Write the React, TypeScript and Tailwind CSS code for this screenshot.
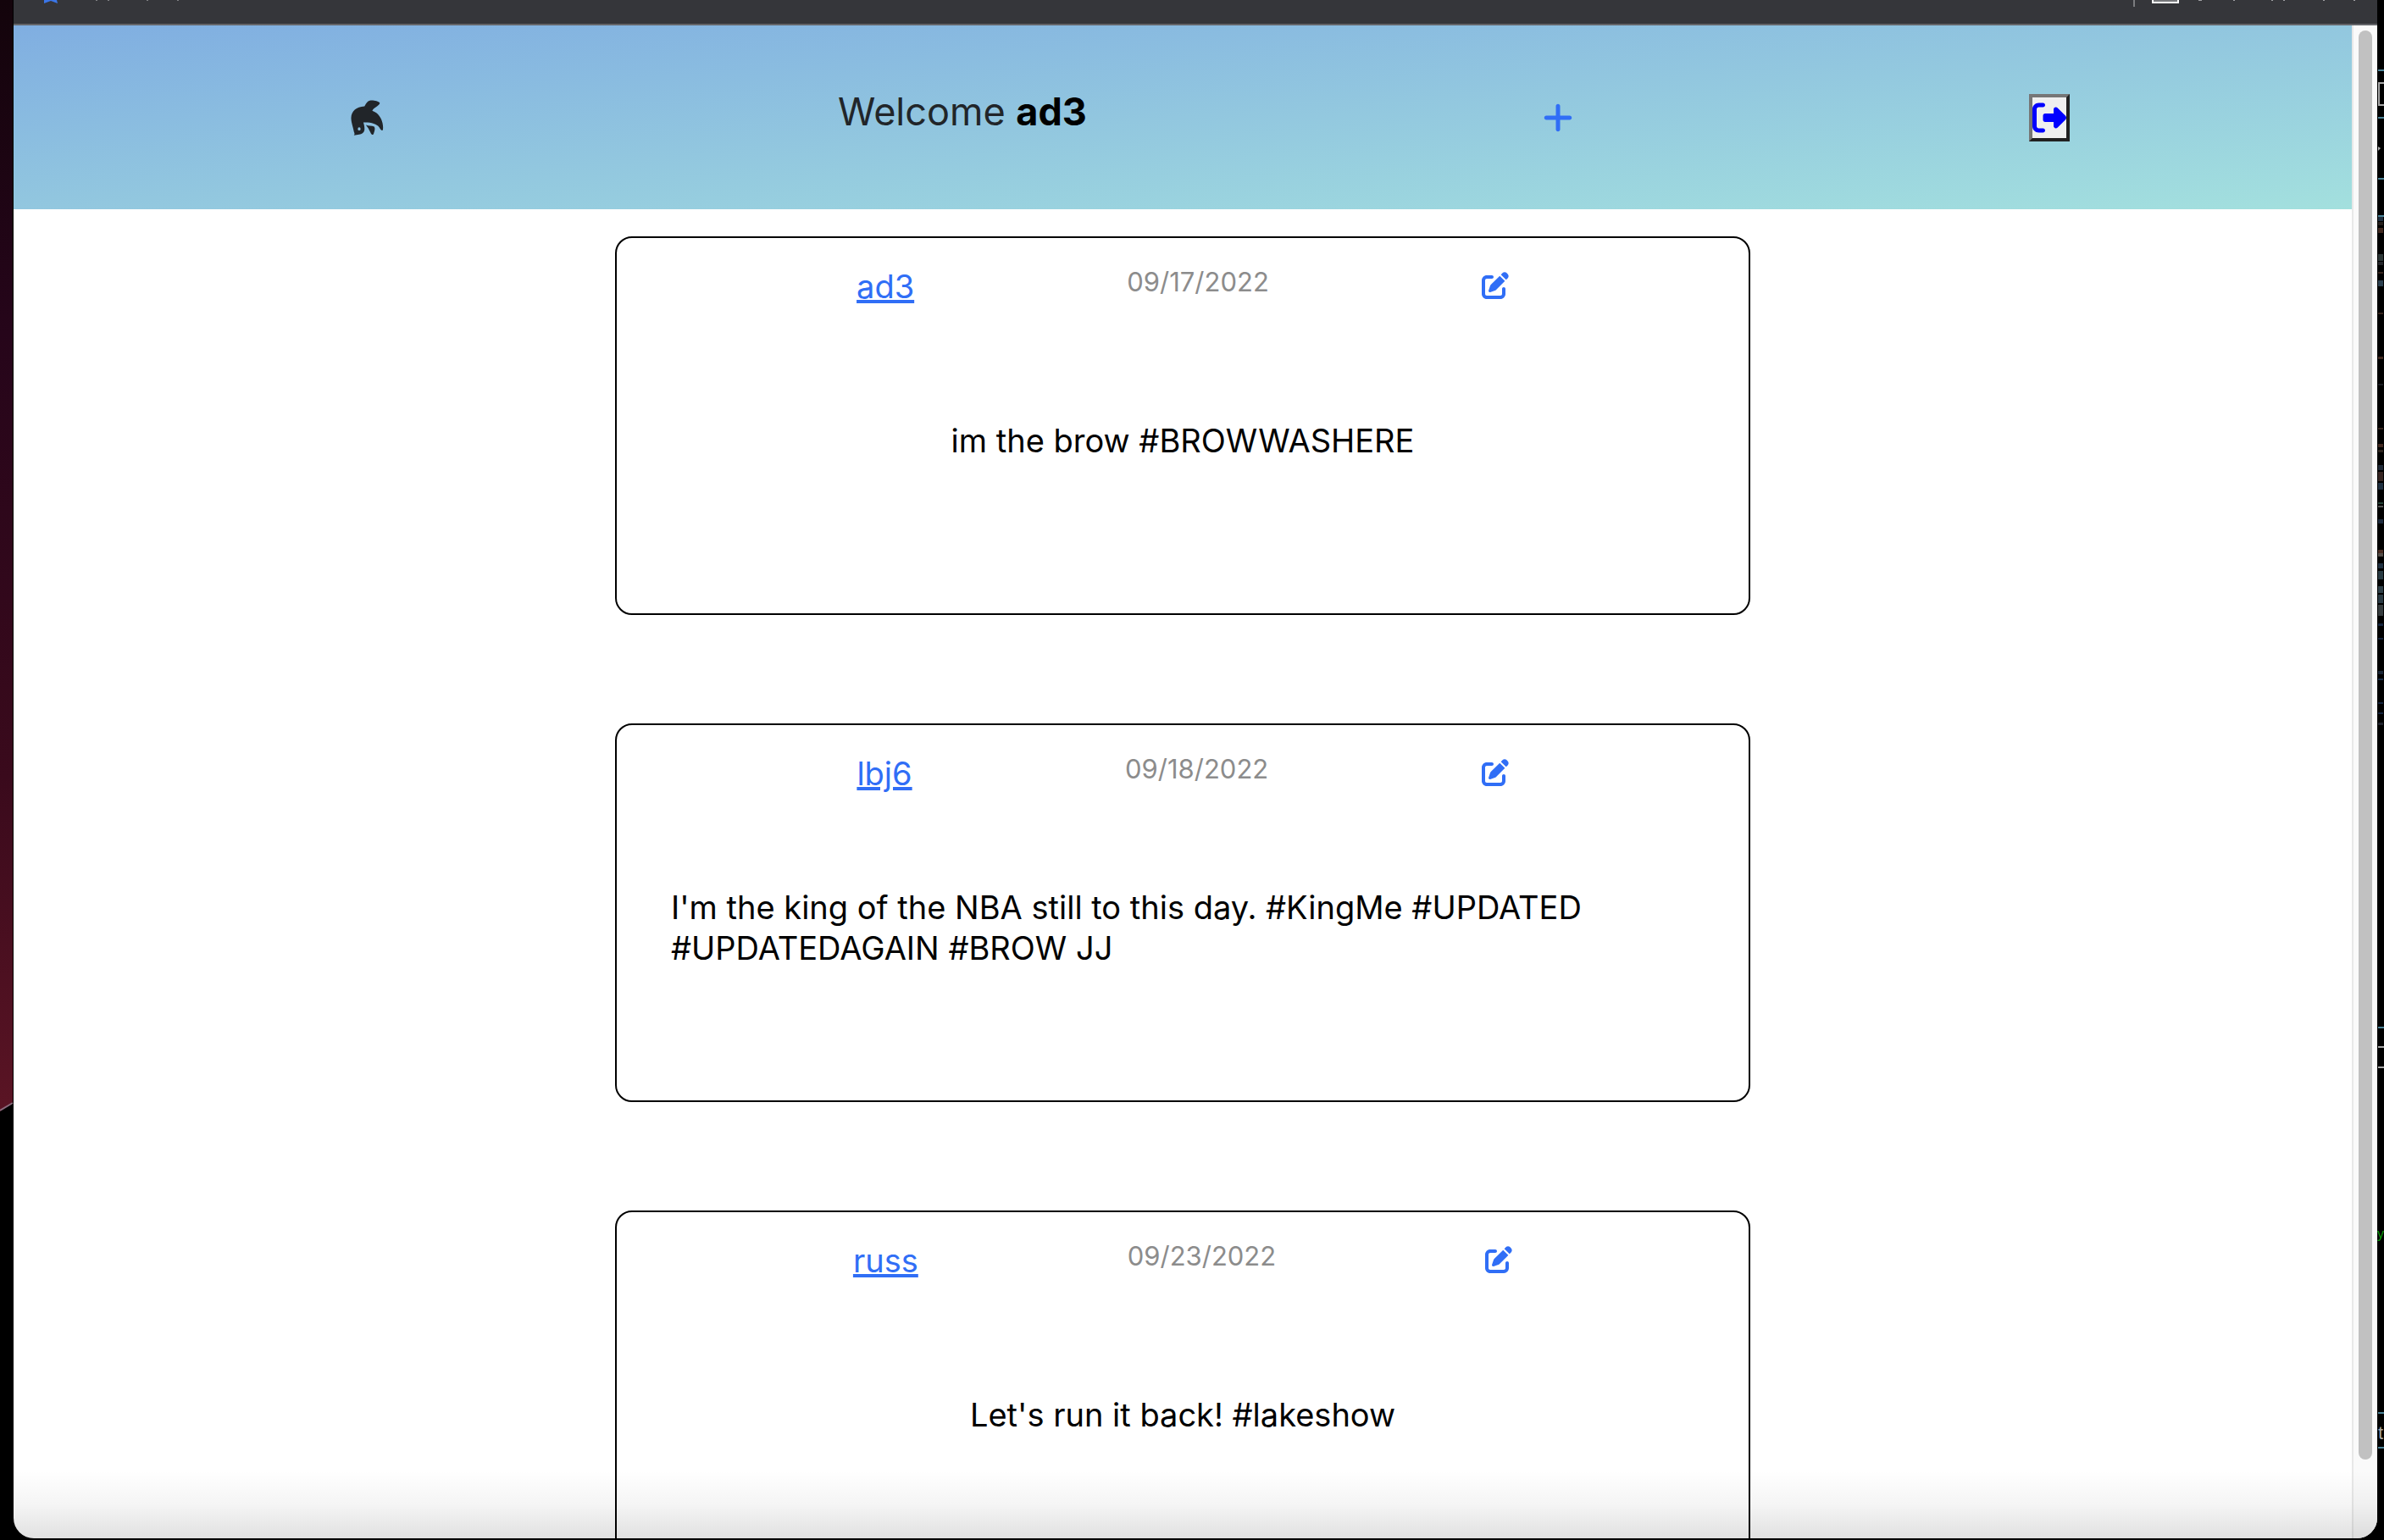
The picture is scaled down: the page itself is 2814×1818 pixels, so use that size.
import React from "react";
import { FaPenToSquare, FaPlus, FaRightFromBracket } from "react-icons/fa6";

type Post = { id: number; author: string; date: string; text: string };

const posts: Post[] = [
  { id: 1, author: "ad3", date: "09/17/2022", text: "im the brow #BROWWASHERE" },
  {
    id: 2,
    author: "lbj6",
    date: "09/18/2022",
    text: "I'm the king of the NBA still to this day. #KingMe #UPDATED #UPDATEDAGAIN #BROW JJ",
  },
  { id: 3, author: "russ", date: "09/23/2022", text: "Let's run it back! #lakeshow" },
];

function DolphinIcon() {
  return (
    <svg viewBox="27 27 118 128" className="h-[42px] w-[39px]" fill="#212529" aria-hidden="true">
      <path
        fillRule="evenodd"
        d="M38 154C42 149 40 146 38 141C36 128 28 108 28 92C29 66 46 53 76 50C82 38 87 31 95 29C107 27 126 31 131 37C132 43 125 47 118 52C112 56 106 60 104 66C127 74 137 93 141 111C143 122 144 131 141 137C135 136 132 130 129 125C119 113 100 107 72 108C75 117 77 126 76 135C74 145 66 150 57 151C50 151 45 154 38 154ZM57 125A5 6 0 1 0 57 137A5 6 0 1 0 57 125Z"
      />
      <path d="M81 117C92 121 101 119 111 123C115 128 113 137 110 145C109 150 107 153 103 152C97 148 96 135 81 117Z" />
    </svg>
  );
}

function BookmarksBar() {
  return (
    <div className="flex h-[30px] shrink-0 items-start border-b-2 border-[#646569] bg-[#35363a]">
      <svg className="ml-8 h-2 w-60" aria-hidden="true">
        <path d="M4 0h15l1 4-8-3-8 3z" fill="#3b76e8" />
        <path d="M65 0h2v1h-2zM79 0h2v1h-2zM125 0h2v1h-2zM161 0h2v1h-2z" fill="#808184" />
      </svg>
      <svg className="ml-auto mr-2 h-2 w-72" aria-hidden="true">
        <rect x="8" width="2" height="8" fill="#7b7c7f" />
        <path d="M30 0h32v4H30z" fill="#ffffff" />
        <path d="M32 0h28v2H32z" fill="#77787b" />
        <path d="M85 0h4v1h-4zM126 0h2v1h-2zM171 0h2v1h-2zM185 0h2v1h-2zM232 0h2v1h-2zM268 0h2v1h-2z" fill="#a0a1a3" />
      </svg>
    </div>
  );
}

function Header() {
  return (
    <header className="flex h-[217px] shrink-0 items-center justify-between bg-linear-to-br from-[#80aee1] via-[#92c7df] to-[#a3e0de] pl-[398px] pr-[333px]">
      <a href="#home" aria-label="Home">
        <DolphinIcon />
      </a>
      <h1 className="mb-3.5 text-[45px] leading-[56px] font-normal text-[#212529]">
        Welcome <strong className="font-bold text-black">ad3</strong>
      </h1>
      <a href="#new" aria-label="New post" className="text-[40px] text-[#306ef6]">
        <FaPlus />
      </a>
      <button
        type="button"
        aria-label="Log out"
        className="border-4 border-t-[#767676] border-r-[#212121] border-b-[#212121] border-l-[#767676] bg-[#efefef] py-1 text-[40px] text-[#0000ff]"
      >
        <FaRightFromBracket />
      </button>
    </header>
  );
}

function PostCard({ post }: { post: Post }) {
  return (
    <article className="flex h-[447px] w-[1340px] max-w-full shrink-0 flex-col rounded-[20px] border-2 border-black p-8">
      <div className="flex items-start justify-evenly">
        <a
          href={"#" + post.author}
          className="text-[38px] leading-[50px] text-[#306ef6] underline decoration-4 underline-offset-2"
        >
          {post.author}
        </a>
        <time className="text-[31px] leading-[40px] text-[#8c8c8c]">{post.date}</time>
        <a
          href={"#edit-" + post.id}
          aria-label={"Edit post by " + post.author}
          className="flex h-12 items-center text-[32px] text-[#306ef6]"
        >
          <FaPenToSquare />
        </a>
      </div>
      <div className="flex grow items-center justify-center px-8 pb-4">
        <p className="text-[38px] leading-[48px] text-black">{post.text}</p>
      </div>
    </article>
  );
}

function Wallpaper() {
  return (
    <div className="w-4 shrink-0">
      <svg className="h-full w-full" aria-hidden="true">
        <defs>
          <linearGradient id="wall" gradientUnits="userSpaceOnUse" x1="0" y1="0" x2="0" y2="1310">
            <stop offset="0" stopColor="#13040b" />
            <stop offset="0.3" stopColor="#26051a" />
            <stop offset="0.7" stopColor="#3a0a1c" />
            <stop offset="1" stopColor="#5a1424" />
          </linearGradient>
        </defs>
        <path d="M0 0H15V1301L0 1312Z" fill="url(#wall)" />
        <path d="M0 1311L15 1302" stroke="#8a6a7c" strokeWidth="2" />
      </svg>
    </div>
  );
}

const codeMarks: [number, number, string][] = [
  [256, 5, "#35506a"], [262, 4, "#3e342e"], [269, 6, "#6a4334"], [300, 8, "#4a5a5a"], [309, 4, "#3c4046"],
  [321, 2, "#5a3e30"], [331, 7, "#4a6a84"], [369, 2, "#5a3e30"], [421, 3, "#6a4334"], [453, 2, "#2c3038"],
  [505, 2, "#5a3e30"], [524, 4, "#6a4334"], [531, 3, "#4a3a30"], [549, 6, "#33455c"], [557, 11, "#5a3e38"],
  [570, 8, "#33506a"], [593, 2, "#3a6a58"], [597, 2, "#8a8a8a"], [613, 5, "#2e4664"], [649, 4, "#7a4a38"],
  [653, 4, "#8a8078"], [665, 6, "#33506a"], [674, 10, "#42606e"], [692, 8, "#4f6a78"], [702, 10, "#466070"],
  [714, 13, "#5a6468"], [736, 3, "#223c66"], [753, 2, "#223c66"], [792, 4, "#2a3e58"], [801, 2, "#2a4a78"],
  [829, 2, "#223c66"], [841, 2, "#223c66"], [853, 3, "#33384a"],
];

const ruleLines = [82, 138, 210, 254, 1212, 1667, 1708];

function BackgroundEditor() {
  return (
    <div className="w-2 shrink-0 overflow-hidden">
      <svg className="h-full w-full" aria-hidden="true">
        {ruleLines.map((y) => (
          <rect key={y} x="1" y={y} width="7" height="2" fill="#4a8296" />
        ))}
        {codeMarks.map(([y, height, color]) => (
          <rect key={y} x="1" y={y} width="6" height={height} fill={color} opacity="0.6" />
        ))}
        <path d="M9 98H2V124H9" fill="none" stroke="#a8a8a8" strokeWidth="2" />
        <path d="M1 173l3 2-3 3z" fill="#b0b0b0" />
        <path d="M1 1235h7v2H1zM1 1259h7v2H1z" fill="#a8a8a8" />
        <text x="0" y="1462" fontSize="16" fill="#0a9a0a" fontFamily="Liberation Sans">y</text>
        <text x="1" y="1699" fontSize="22" fill="#a8a8a8" fontFamily="Liberation Sans">t</text>
      </svg>
    </div>
  );
}

export default function App() {
  return (
    <div className="flex h-screen overflow-hidden bg-black font-['Inter',sans-serif]">
      <Wallpaper />
      <div className="relative mb-0.5 flex min-w-0 grow flex-col overflow-hidden rounded-b-3xl bg-white">
        <BookmarksBar />
        <div className="flex min-h-0 grow">
          <div className="flex min-w-0 grow flex-col overflow-hidden">
            <Header />
            <main className="flex flex-col items-center gap-32 pt-8">
              {posts.map((post) => (
                <PostCard key={post.id} post={post} />
              ))}
            </main>
          </div>
          <div className="flex w-[30px] shrink-0 flex-col border-l-2 border-[#e8e8e8] bg-[#fafafa] px-1.5 pt-1.5 pb-[93px]">
            <div className="w-4 grow rounded-full bg-[#c1c1c1]" />
          </div>
        </div>
        <div className="pointer-events-none absolute inset-x-0 bottom-0 h-20 bg-linear-to-t from-black/12 via-black/4 to-transparent" />
      </div>
      <BackgroundEditor />
    </div>
  );
}
